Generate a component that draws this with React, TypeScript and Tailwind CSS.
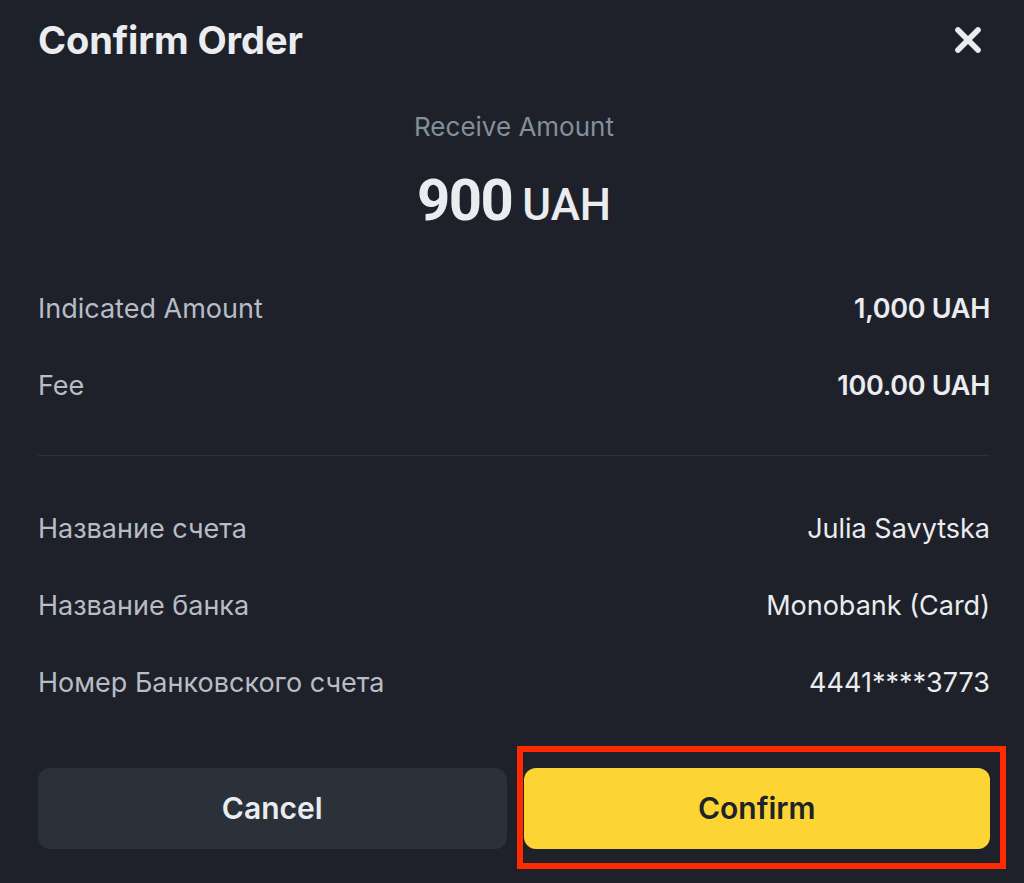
import { X } from "lucide-react";

const font = { fontFamily: "Inter, 'Noto Sans', sans-serif" };

const Row = ({ label, value, strong }: { label: string; value: string; strong?: boolean }) => (
  <div className="flex items-center justify-between h-[77px]">
    <span className="text-[27px] text-[#b7bdc6]">{label}</span>
    <span className={strong ? "text-[27px] font-semibold text-[#eaecef] tracking-[-0.3px]" : "text-[27px] text-[#eaecef]"}>{value}</span>
  </div>
);

export default function App() {
  return (
    <div className="w-[1024px] h-[883px] bg-[#1e2129] relative overflow-hidden" style={font}>
      <div className="pl-[38px] pr-[34px] flex flex-col">
        <div className="flex items-center justify-between h-[80px]">
          <h1 className="text-[38px] font-bold text-[#eaecef] tracking-[-0.1px]">Confirm Order</h1>
          <X className="w-[40px] h-[40px] text-[#eaecef] mr-[2px]" strokeWidth={3.4} />
        </div>
        <div className="flex flex-col items-center">
          <p className="text-[26px] text-[#848e9c] mt-[12px] leading-[70px]">Receive Amount</p>
          <p className="flex items-baseline gap-[10px] text-[#eaecef] mt-[-2px] leading-[80px] font-['Roboto',sans-serif]">
            <span className="text-[58px] font-bold tracking-[-1.5px]">900</span>
            <span className="text-[44px] font-medium">UAH</span>
          </p>
        </div>
        <div className="mt-[26px]">
          <Row label="Indicated Amount" value="1,000 UAH" strong />
          <Row label="Fee" value="100.00 UAH" strong />
        </div>
        <div className="h-px bg-[#2b3139] mt-[30px] mb-[35px]" />
        <div>
          <Row label="Название счета" value="Julia Savytska" />
          <Row label="Название банка" value="Monobank (Card)" />
          <Row label="Номер Банковского счета" value="4441****3773" />
        </div>
        <div className="flex gap-[17px] mt-[46px]">
          <button className="w-[469px] h-[81px] rounded-[12px] bg-[#2b3139] text-[#eaecef] text-[30px] font-semibold">
            Cancel
          </button>
          <button className="w-[467px] h-[81px] rounded-[12px] bg-[#fcd535] text-[#1e2329] text-[30px] font-semibold">
            Confirm
          </button>
        </div>
      </div>
      <div className="absolute left-[517px] top-[746px] w-[489px] h-[123px] border-[6px] border-[#ff2a00]" />
    </div>
  );
}
